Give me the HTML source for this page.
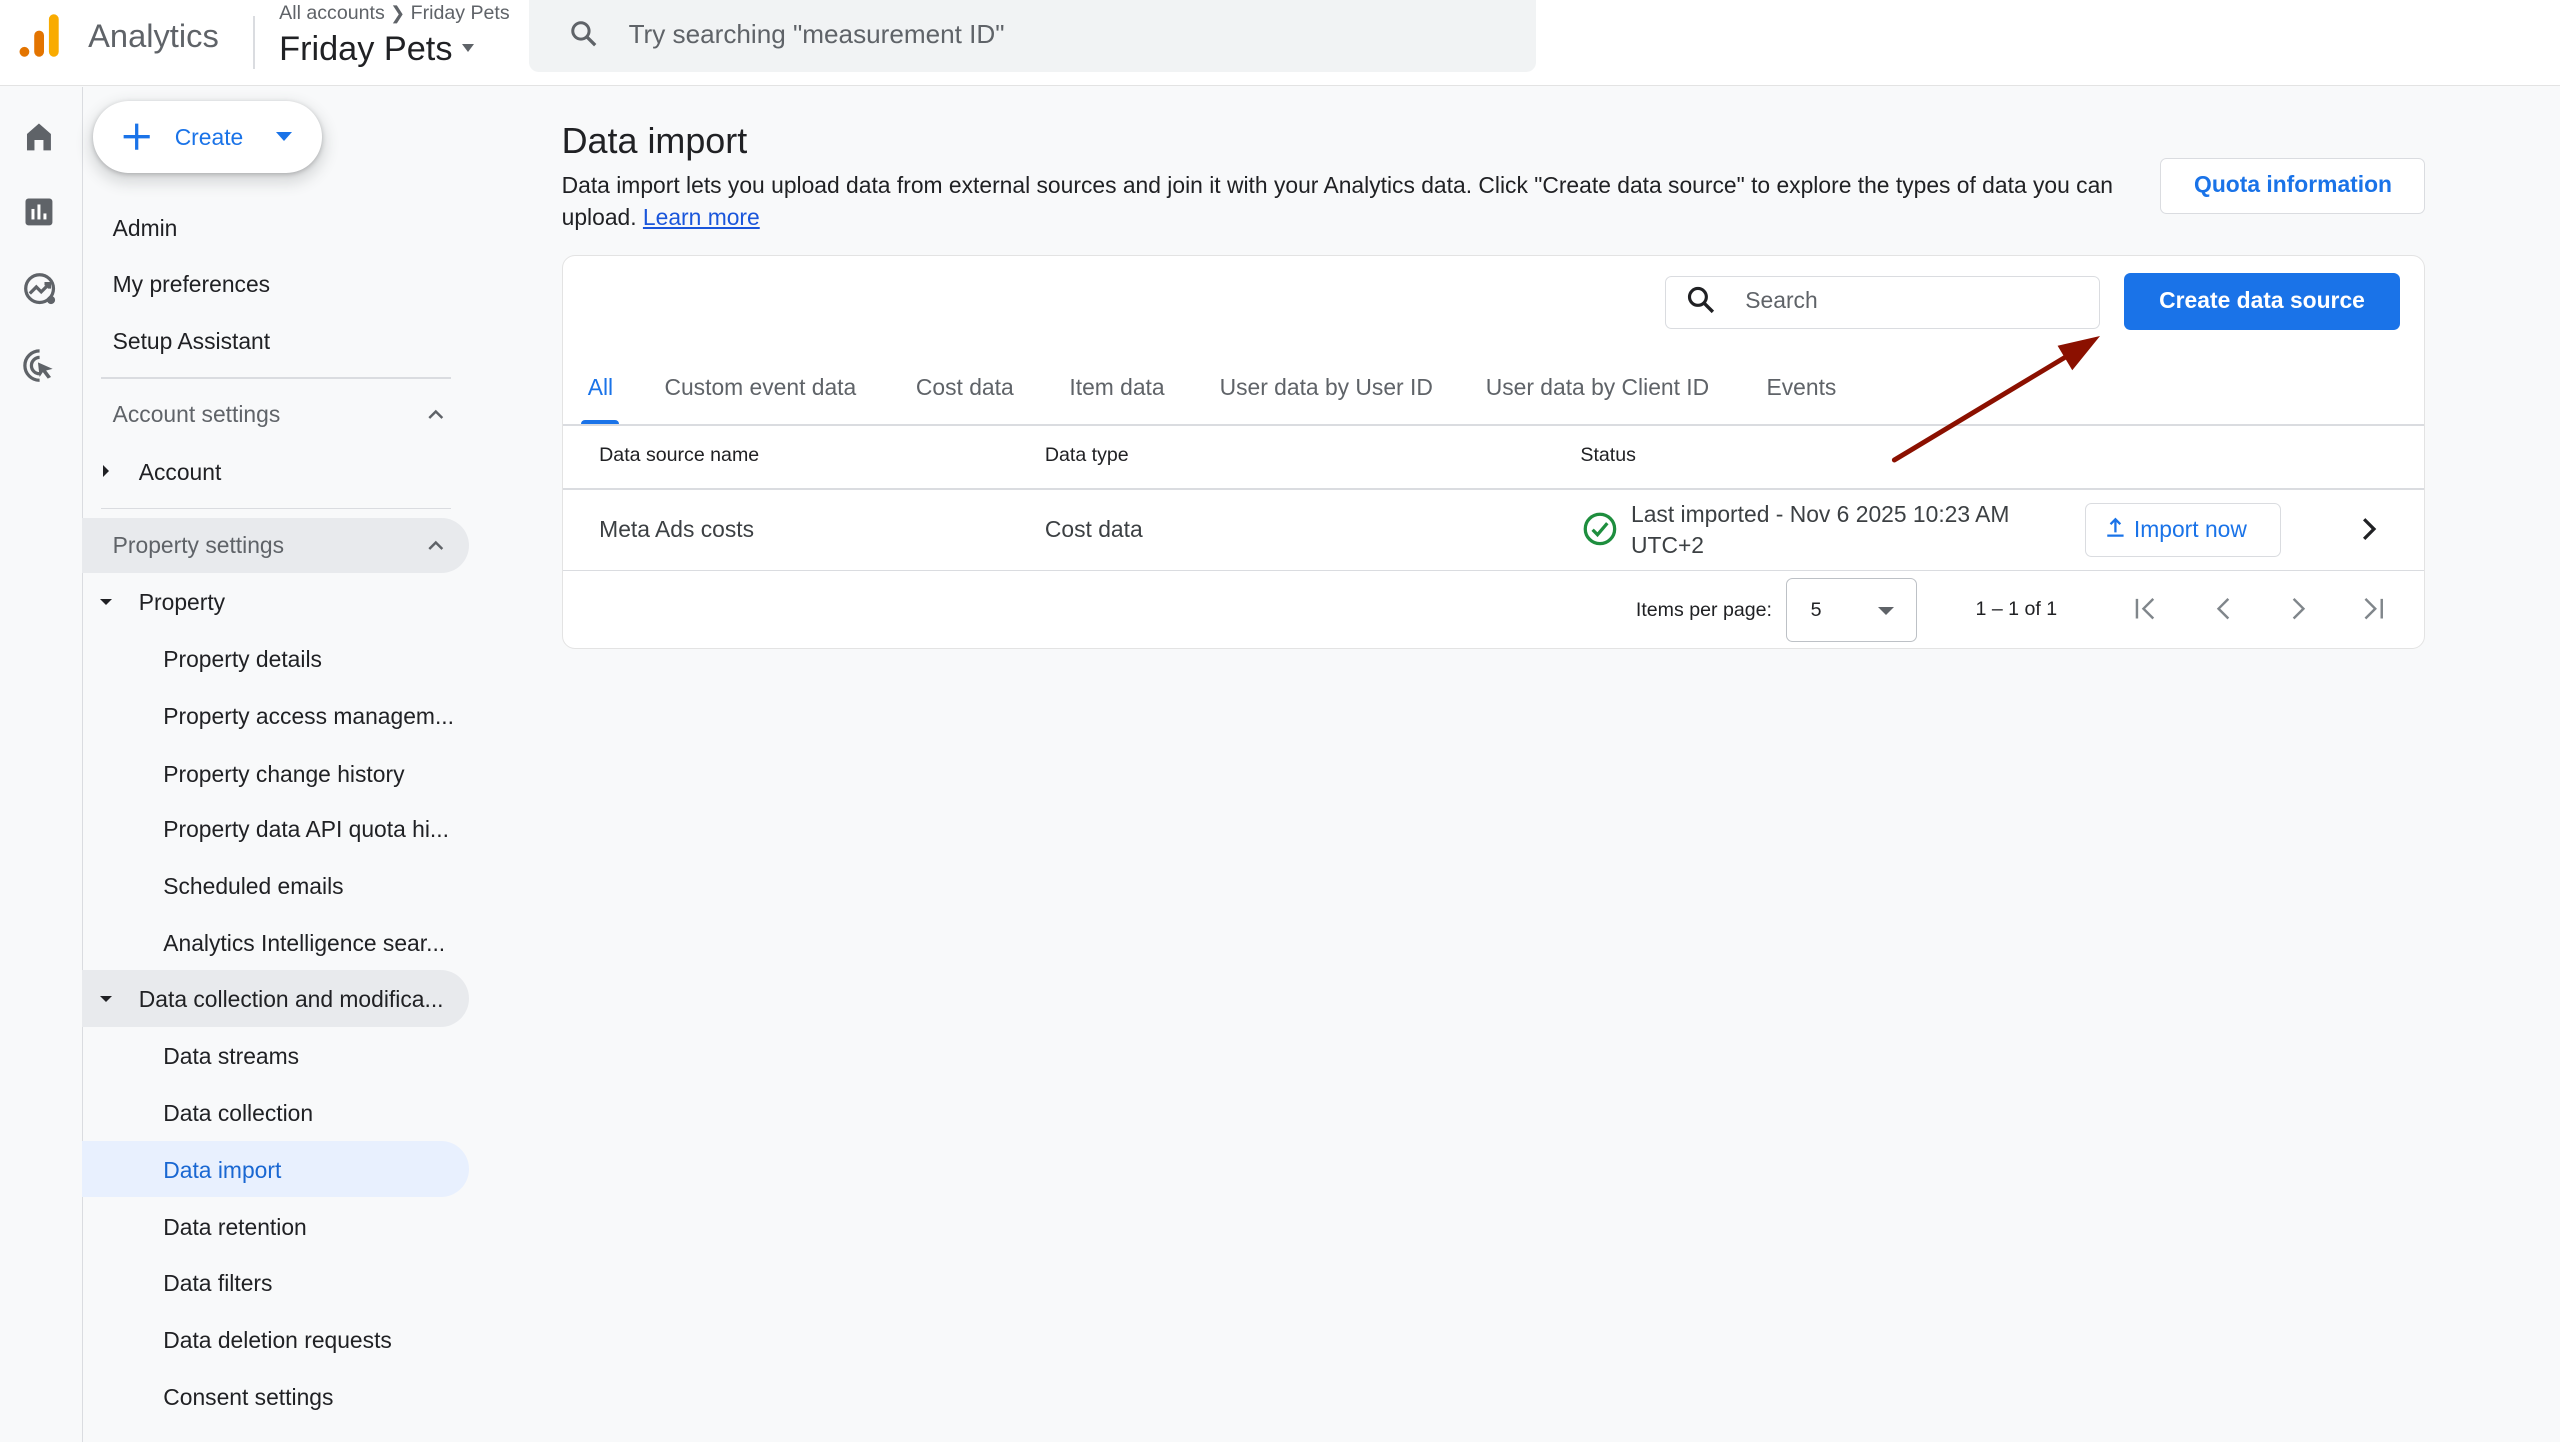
<!DOCTYPE html>
<html><head><meta charset="utf-8">
<style>
html,body{margin:0;padding:0;}
html{width:2560px;height:1441px;overflow:hidden;background:#f8f9fa;}
body{zoom:1.63265;width:1568px;height:883px;position:relative;font-family:"Liberation Sans",Arial,sans-serif;color:#202124;background:#f8f9fa;overflow:hidden;}
.a{position:absolute;white-space:nowrap;}
.t{position:absolute;white-space:nowrap;line-height:20px;font-size:14px;}
.g{color:#5f6368;}
.b{color:#1a73e8;}
.hl{position:absolute;background:#e8eaed;border-radius:0 18px 18px 0;}
</style></head><body>
<div class="a" style="left:0;top:0;width:1568px;height:52px;background:#fff;border-bottom:1px solid #e3e3e3;"></div>
<svg class="a" style="left:8px;top:7px" width="30" height="30" viewBox="0 0 30 30">
<rect x="22" y="2" width="6" height="26" rx="3" fill="#f9ab00"/>
<rect x="13" y="12" width="6" height="16" rx="3" fill="#e37400"/>
<circle cx="7" cy="25" r="3" fill="#e37400"/></svg>
<div class="a g" style="left:54px;top:10px;font-size:20px;line-height:24px;">Analytics</div>
<div class="a" style="left:155px;top:10px;width:1px;height:32px;background:#dadce0;"></div>
<div class="a g" style="left:171px;top:1px;font-size:12px;line-height:14px;">All accounts <span style="font-size:11px">❯</span> Friday Pets</div>
<div class="a" style="left:171px;top:17px;font-size:21px;line-height:26px;">Friday Pets</div>
<div class="a" style="left:283px;top:27px;width:0;height:0;border-left:4px solid transparent;border-right:4px solid transparent;border-top:5px solid #5f6368;"></div>
<div class="a" style="left:324px;top:0;width:617px;height:44px;background:#f1f3f4;border-radius:0 0 6px 6px;"></div>
<svg class="a" style="left:348px;top:11px" width="20" height="20" viewBox="0 0 24 24"><circle cx="9.5" cy="9.5" r="6" fill="none" stroke="#5f6368" stroke-width="2.2"/><path d="M14 14l6 6" stroke="#5f6368" stroke-width="2.4"/></svg>
<div class="a g" style="left:385px;top:11px;font-size:16px;line-height:20px;">Try searching "measurement ID"</div>

<div class="a" style="left:50px;top:53px;width:1px;height:830px;background:#dadce0;"></div>
<svg class="a" style="left:13px;top:73px" width="22" height="22" viewBox="0 0 24 24"><path d="M4 21V10l8-7 8 7v11h-5v-7H9v7z" fill="#5f6368"/></svg>
<svg class="a" style="left:13px;top:119px" width="22" height="22" viewBox="0 0 24 24"><rect x="3" y="3" width="18" height="18" rx="2" fill="#5f6368"/><rect x="7" y="10" width="2" height="7" fill="#fff"/><rect x="11" y="7" width="2" height="10" fill="#fff"/><rect x="15" y="13" width="2" height="4" fill="#fff"/></svg>
<svg class="a" style="left:12px;top:165px" width="24" height="24" viewBox="0 0 24 24"><circle cx="12" cy="12" r="8.5" fill="none" stroke="#5f6368" stroke-width="2"/><path d="M6 15l4-4 3 3 5-5M15 9h3v3" fill="none" stroke="#5f6368" stroke-width="2"/><circle cx="19" cy="19" r="2.5" fill="#5f6368"/></svg>
<svg class="a" style="left:12px;top:212px" width="24" height="24" viewBox="0 0 24 24"><path d="M12 3a9 9 0 1 0 0 18" fill="none" stroke="#5f6368" stroke-width="2"/><path d="M12 7a5 5 0 1 0 0 10" fill="none" stroke="#5f6368" stroke-width="2"/><path d="M11 10l9 4-4 1 3 4-2 1-3-4-2 3z" fill="#5f6368"/></svg>

<div class="a" style="left:57px;top:62px;width:140px;height:44px;background:#fff;border-radius:22px;box-shadow:0 1px 3px rgba(60,64,67,.3),0 4px 8px 3px rgba(60,64,67,.15);"></div>
<svg class="a" style="left:75px;top:75px" width="18" height="18" viewBox="0 0 18 18"><path d="M9 1v16M1 9h16" stroke="#1a73e8" stroke-width="2"/></svg>
<div class="t b" style="left:107px;top:74px;font-size:14px;">Create</div>
<div class="a" style="left:169px;top:81px;border-left:5px solid transparent;border-right:5px solid transparent;border-top:6px solid #1a73e8;"></div>

<div class="t" style="left:69px;top:130px;">Admin</div>
<div class="t" style="left:69px;top:164px;">My preferences</div>
<div class="t" style="left:69px;top:199px;">Setup Assistant</div>
<div class="a" style="left:62px;top:231px;width:214px;height:1px;background:#dadce0;"></div>
<div class="t g" style="left:69px;top:244px;">Account settings</div>
<svg class="a" style="left:261px;top:248px" width="12" height="12" viewBox="0 0 12 12"><path d="M2 8l4-4 4 4" fill="none" stroke="#5f6368" stroke-width="1.5"/></svg>
<div class="a" style="left:63px;top:285px;border-top:4px solid transparent;border-bottom:4px solid transparent;border-left:4px solid #202124;"></div>
<div class="t" style="left:85px;top:279px;">Account</div>
<div class="a" style="left:62px;top:311px;width:214px;height:1px;background:#dadce0;"></div>
<div class="hl" style="left:50px;top:317px;width:237px;height:34px;"></div>
<div class="t g" style="left:69px;top:324px;">Property settings</div>
<svg class="a" style="left:261px;top:328px" width="12" height="12" viewBox="0 0 12 12"><path d="M2 8l4-4 4 4" fill="none" stroke="#5f6368" stroke-width="1.5"/></svg>
<div class="a" style="left:61px;top:367px;border-left:4px solid transparent;border-right:4px solid transparent;border-top:4px solid #202124;"></div>
<div class="t" style="left:85px;top:359px;">Property</div>
<div class="t" style="left:100px;top:394px;">Property details</div>
<div class="t" style="left:100px;top:429px;">Property access managem...</div>
<div class="t" style="left:100px;top:464px;">Property change history</div>
<div class="t" style="left:100px;top:498px;">Property data API quota hi...</div>
<div class="t" style="left:100px;top:533px;">Scheduled emails</div>
<div class="t" style="left:100px;top:568px;">Analytics Intelligence sear...</div>
<div class="hl" style="left:50px;top:594px;width:237px;height:35px;"></div>
<div class="a" style="left:61px;top:610px;border-left:4px solid transparent;border-right:4px solid transparent;border-top:4px solid #202124;"></div>
<div class="t" style="left:85px;top:602px;">Data collection and modifica...</div>
<div class="t" style="left:100px;top:637px;">Data streams</div>
<div class="t" style="left:100px;top:672px;">Data collection</div>
<div class="hl" style="left:50px;top:699px;width:237px;height:34px;background:#e8f0fe;"></div>
<div class="t" style="left:100px;top:707px;color:#1967d2;">Data import</div>
<div class="t" style="left:100px;top:742px;">Data retention</div>
<div class="t" style="left:100px;top:776px;">Data filters</div>
<div class="t" style="left:100px;top:811px;">Data deletion requests</div>
<div class="t" style="left:100px;top:846px;">Consent settings</div>

<div class="a" style="left:344px;top:72px;font-size:22px;line-height:28px;">Data import</div>
<div class="a" style="left:344px;top:104px;width:960px;font-size:14px;line-height:19.5px;white-space:normal;">Data import lets you upload data from external sources and join it with your Analytics data. Click "Create data source" to explore the types of data you can upload. <span style="text-decoration:underline;color:#1a56db">Learn more</span></div>
<div class="a" style="left:1323px;top:97px;width:161px;height:33px;background:#fff;border:1px solid #dadce0;border-radius:4px;"></div>
<div class="t b" style="left:1323px;top:103px;width:163px;text-align:center;font-weight:bold;">Quota information</div>

<div class="a" style="left:344px;top:156px;width:1140px;height:240px;background:#fff;border:1px solid #e3e3e3;border-radius:8px;"></div>
<div class="a" style="left:1020px;top:169px;width:265px;height:31px;border:1px solid #dadce0;border-radius:4px;background:#fff;"></div>
<svg class="a" style="left:1032px;top:174px" width="20" height="20" viewBox="0 0 24 24"><circle cx="9.5" cy="9.5" r="6.2" fill="none" stroke="#202124" stroke-width="2.3"/><path d="M14 14l6.5 6.5" stroke="#202124" stroke-width="2.5"/></svg>
<div class="t g" style="left:1069px;top:174px;">Search</div>
<div class="a" style="left:1301px;top:167px;width:169px;height:35px;background:#1a73e8;border-radius:4px;"></div>
<div class="t" style="left:1301px;top:174px;width:169px;text-align:center;color:#fff;font-weight:bold;">Create data source</div>

<div class="t b" style="left:360px;top:227px;">All</div>
<div class="a" style="left:356px;top:257px;width:23px;height:3px;background:#1a73e8;border-radius:3px 3px 0 0;"></div>
<div class="t g" style="left:407px;top:227px;">Custom event data</div>
<div class="t g" style="left:561px;top:227px;">Cost data</div>
<div class="t g" style="left:655px;top:227px;">Item data</div>
<div class="t g" style="left:747px;top:227px;">User data by User ID</div>
<div class="t g" style="left:910px;top:227px;">User data by Client ID</div>
<div class="t g" style="left:1082px;top:227px;">Events</div>
<div class="a" style="left:345px;top:260px;width:1140px;height:1px;background:#dadce0;"></div>
<div class="t" style="left:367px;top:269px;font-size:12px;">Data source name</div>
<div class="t" style="left:640px;top:269px;font-size:12px;">Data type</div>
<div class="t" style="left:968px;top:269px;font-size:12px;">Status</div>
<div class="a" style="left:345px;top:299px;width:1140px;height:1px;background:#dadce0;"></div>
<div class="t" style="left:367px;top:314px;color:#3c4043;">Meta Ads costs</div>
<div class="t" style="left:640px;top:314px;color:#3c4043;">Cost data</div>
<svg class="a" style="left:969px;top:313px" width="22" height="22" viewBox="0 0 22 22"><circle cx="11" cy="11" r="9" fill="none" stroke="#1e8e3e" stroke-width="2"/><path d="M6.5 11.5l3 3 6-7" fill="none" stroke="#1e8e3e" stroke-width="2"/></svg>
<div class="t" style="left:999px;top:305px;color:#3c4043;">Last imported - Nov 6 2025 10:23 AM</div>
<div class="t" style="left:999px;top:324px;color:#3c4043;">UTC+2</div>
<div class="a" style="left:1277px;top:308px;width:119px;height:32px;border:1px solid #dadce0;border-radius:4px;"></div>
<svg class="a" style="left:1289px;top:316px" width="14" height="14" viewBox="0 0 14 14"><path d="M7 10V2M4 5l3-3 3 3M2 12h10" fill="none" stroke="#1a73e8" stroke-width="1.4"/></svg>
<div class="t b" style="left:1307px;top:314px;">Import now</div>
<svg class="a" style="left:1443px;top:316px" width="16" height="16" viewBox="0 0 16 16"><path d="M5 2l6 6-6 6" fill="none" stroke="#202124" stroke-width="2"/></svg>
<div class="a" style="left:345px;top:349px;width:1140px;height:1px;background:#dadce0;"></div>
<div class="t" style="left:1002px;top:364px;font-size:12px;">Items per page:</div>
<div class="a" style="left:1094px;top:354px;width:79px;height:38px;border:1px solid #bdc1c6;border-radius:4px;"></div>
<div class="t" style="left:1109px;top:364px;font-size:12px;">5</div>
<div class="a" style="left:1150px;top:372px;border-left:5px solid transparent;border-right:5px solid transparent;border-top:5px solid #5f6368;"></div>
<div class="t" style="left:1210px;top:363px;font-size:12px;">1 – 1 of 1</div>
<svg class="a" style="left:1306px;top:364px" width="170" height="18" viewBox="0 0 170 18"><g fill="none" stroke="#80868b" stroke-width="1.5"><path d="M3 3v12M13 3l-6 6 6 6"/><path d="M59 3l-6 6 6 6"/><path d="M99 3l6 6-6 6"/><path d="M143 3l6 6-6 6M153 3v12"/></g></svg>

<svg class="a" style="left:1150px;top:195px" width="150" height="100" viewBox="0 0 150 100"><path d="M10 87L118 22" stroke="#8b1000" stroke-width="3" stroke-linecap="round"/><path d="M136 11L110 17l9 15z" fill="#8b1000"/></svg>
</body></html>
